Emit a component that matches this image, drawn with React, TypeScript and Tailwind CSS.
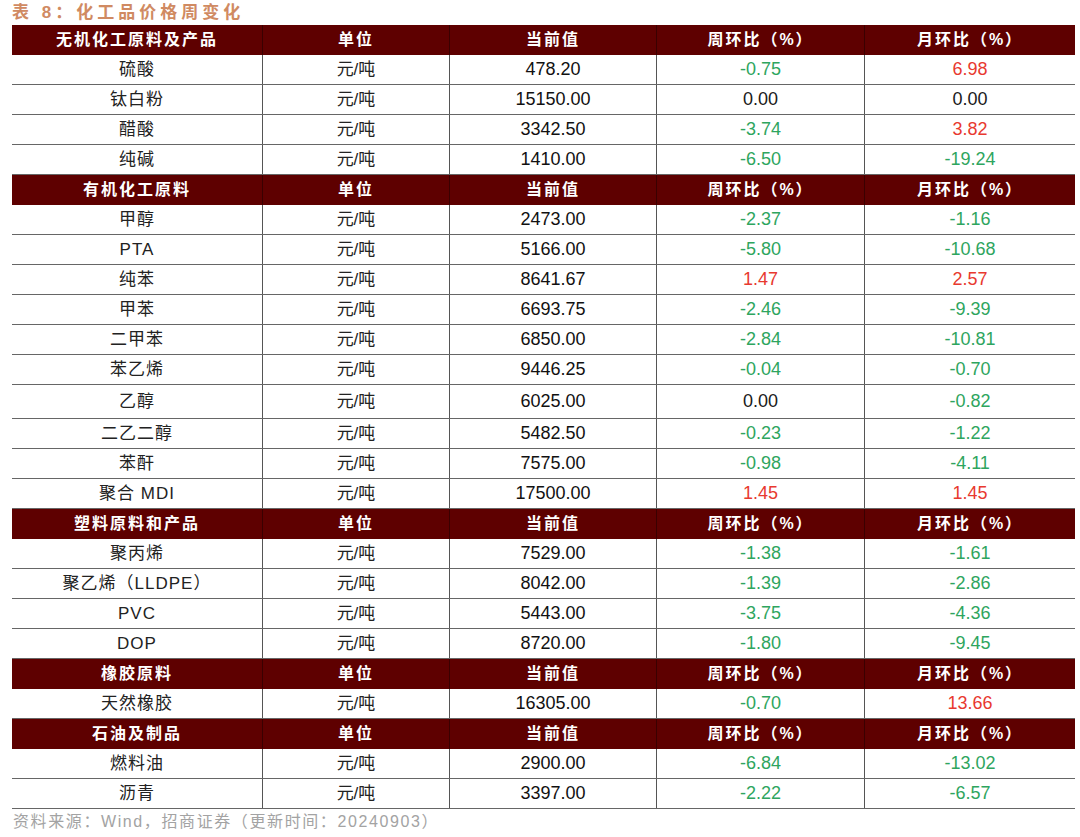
type Row = {
  name: string
  unit: string
  value: string
  week: string
  month: string
  tall?: boolean
}

type Section = {
  title: string
  rows: Row[]
}

const sections: Section[] = [
  {
    title: "无机化工原料及产品",
    rows: [
      { name: "硫酸", unit: "元/吨", value: "478.20", week: "-0.75", month: "6.98" },
      { name: "钛白粉", unit: "元/吨", value: "15150.00", week: "0.00", month: "0.00" },
      { name: "醋酸", unit: "元/吨", value: "3342.50", week: "-3.74", month: "3.82" },
      { name: "纯碱", unit: "元/吨", value: "1410.00", week: "-6.50", month: "-19.24" },
    ],
  },
  {
    title: "有机化工原料",
    rows: [
      { name: "甲醇", unit: "元/吨", value: "2473.00", week: "-2.37", month: "-1.16" },
      { name: "PTA", unit: "元/吨", value: "5166.00", week: "-5.80", month: "-10.68" },
      { name: "纯苯", unit: "元/吨", value: "8641.67", week: "1.47", month: "2.57" },
      { name: "甲苯", unit: "元/吨", value: "6693.75", week: "-2.46", month: "-9.39" },
      { name: "二甲苯", unit: "元/吨", value: "6850.00", week: "-2.84", month: "-10.81" },
      { name: "苯乙烯", unit: "元/吨", value: "9446.25", week: "-0.04", month: "-0.70" },
      { name: "乙醇", unit: "元/吨", value: "6025.00", week: "0.00", month: "-0.82", tall: true },
      { name: "二乙二醇", unit: "元/吨", value: "5482.50", week: "-0.23", month: "-1.22" },
      { name: "苯酐", unit: "元/吨", value: "7575.00", week: "-0.98", month: "-4.11" },
      { name: "聚合 MDI", unit: "元/吨", value: "17500.00", week: "1.45", month: "1.45" },
    ],
  },
  {
    title: "塑料原料和产品",
    rows: [
      { name: "聚丙烯", unit: "元/吨", value: "7529.00", week: "-1.38", month: "-1.61" },
      { name: "聚乙烯（LLDPE）", unit: "元/吨", value: "8042.00", week: "-1.39", month: "-2.86" },
      { name: "PVC", unit: "元/吨", value: "5443.00", week: "-3.75", month: "-4.36" },
      { name: "DOP", unit: "元/吨", value: "8720.00", week: "-1.80", month: "-9.45" },
    ],
  },
  {
    title: "橡胶原料",
    rows: [
      { name: "天然橡胶", unit: "元/吨", value: "16305.00", week: "-0.70", month: "13.66" },
    ],
  },
  {
    title: "石油及制品",
    rows: [
      { name: "燃料油", unit: "元/吨", value: "2900.00", week: "-6.84", month: "-13.02" },
      { name: "沥青", unit: "元/吨", value: "3397.00", week: "-2.22", month: "-6.57" },
    ],
  },
]

const font = { fontFamily: '"Liberation Sans", "Noto Sans CJK SC", sans-serif' }

function changeColor(v: string) {
  const n = parseFloat(v)
  if (n > 0) return "text-[#e8392f]"
  if (n < 0) return "text-[#2ea55e]"
  return "text-[#1a1a1a]"
}

function HeaderRow({ title }: { title: string }) {
  const cell = "flex items-center justify-center border-r border-[#3a0000] font-bold text-white text-[16px] tracking-[2px]"
  return (
    <div className="flex h-[30px] bg-[#5e0000]">
      <div className={`${cell} w-[251px]`}>{title}</div>
      <div className={`${cell} w-[187px]`}>单位</div>
      <div className={`${cell} w-[207px]`}>当前值</div>
      <div className={`${cell} w-[208px]`}>周环比（%）</div>
      <div className={`${cell} w-[210px] border-r-0`}>月环比（%）</div>
    </div>
  )
}

function DataRow({ row }: { row: Row }) {
  const cell = "flex items-center justify-center border-r border-[#555]"
  return (
    <div className={`flex border-b border-[#666] text-[17px] ${row.tall ? "h-[34px]" : "h-[30px]"}`}>
      <div className={`${cell} w-[251px] text-[#222] tracking-[1px]`}>{row.name}</div>
      <div className={`${cell} w-[187px] text-[#222]`}>{row.unit}</div>
      <div className={`${cell} w-[207px] text-[#111] text-[18px]`}>{row.value}</div>
      <div className={`${cell} w-[208px] text-[18px] ${changeColor(row.week)}`}>{row.week}</div>
      <div className={`flex w-[210px] items-center justify-center text-[18px] ${changeColor(row.month)}`}>
        {row.month}
      </div>
    </div>
  )
}

export default function App() {
  return (
    <div className="h-[837px] w-[1080px] overflow-hidden bg-white" style={font}>
      <div className="flex h-[25px] items-center pl-[12px] text-[17px] font-bold tracking-[4px] text-[#d08a62]">
        表 8：化工品价格周变化
      </div>
      <div className="ml-[12px] w-[1063px]">
        {sections.map((s) => (
          <div key={s.title}>
            <HeaderRow title={s.title} />
            {s.rows.map((r) => (
              <DataRow key={r.name} row={r} />
            ))}
          </div>
        ))}
      </div>
      <div className="mt-[1px] pl-[13px] text-[16px] tracking-[1.6px] text-[#a3a3a3]">
        资料来源：Wind，招商证券（更新时间：20240903）
      </div>
    </div>
  )
}
